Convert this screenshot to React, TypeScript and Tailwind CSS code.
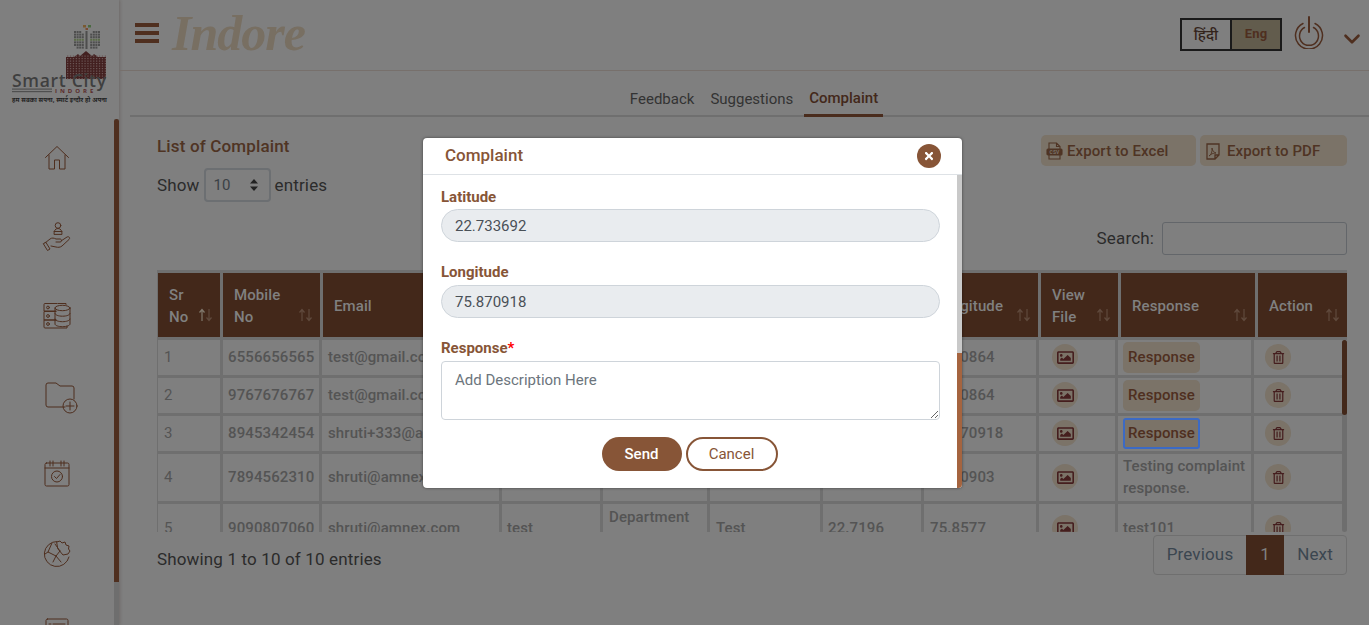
import { FaRegImage, FaRegTrashAlt, FaTimes } from 'react-icons/fa';
import { ChevronDown } from 'lucide-react';

const HEAD_COLS = [65, 100, 179, 101, 107, 113, 101, 117, 80, 137, 92];
const BODY_COLS = [65, 99, 180, 101, 107, 113, 101, 115, 79, 136, 91];

const HEADERS = [
  ['Sr', 'No'],
  ['Mobile', 'No'],
  ['Email'],
  ['Name'],
  ['Department'],
  ['Complaint'],
  ['Latitude'],
  ['Longitude'],
  ['View', 'File'],
  ['Response'],
  ['Action'],
];

type Row = {
  mobile: string;
  email: string;
  name: string;
  dept: string;
  text: string;
  lat: string;
  lng: string;
  response: string;
  focus?: boolean;
  h: string;
};

const ROWS: Row[] = [
  { mobile: '6556656565', email: 'test@gmail.com', name: 'test', dept: 'Water', text: 'Test', lat: '22.7196', lng: '75.80864', response: '', h: 'h-[36px]' },
  { mobile: '9767676767', email: 'test@gmail.com', name: 'test', dept: 'Water', text: 'Test', lat: '22.7196', lng: '75.80864', response: '', h: 'h-[38px]' },
  { mobile: '8945342454', email: 'shruti+333@amnex.com', name: 'shruti', dept: 'Roads', text: 'Test', lat: '22.733692', lng: '75.870918', response: '', focus: true, h: 'h-[38px]' },
  { mobile: '7894562310', email: 'shruti@amnex.com', name: 'shruti', dept: 'Roads', text: 'Test', lat: '22.7196', lng: '75.80903', response: 'Testing complaint response.', h: 'h-[50px]' },
  { mobile: '9090807060', email: 'shruti@amnex.com', name: 'test', dept: 'Department of Water', text: 'Test', lat: '22.7196', lng: '75.8577', response: 'test101', h: 'h-[52px]' },
];

function SortArrows({ active }: { active?: boolean }) {
  return (
    <svg width="15" height="14" viewBox="0 0 15 14" className="absolute right-[7px] bottom-[15px]" fill="none" strokeWidth="1.2">
      <path d="M4 13V2M1.500 4.500 4 1.500l2.500 3" stroke={active ? '#80786c' : '#604a3d'} />
      <path d="M11 1v11M8.500 9.500 11 12.500l2.500-3" stroke="#604a3d" />
    </svg>
  );
}

function Logo() {
  const wings: number[][] = [];
  for (let y = 0; y < 7; y++) {
    for (let x = 0; x < 4; x++) {
      if (!(y === 6 && x === 0) && !(y === 0 && x === 3)) wings.push([x, y]);
    }
  }
  const palace: number[][] = [];
  for (let y = 0; y < 10; y++) {
    for (let x = 0; x < 14; x++) {
      palace.push([x, y]);
    }
  }
  return (
    <svg width="118" height="118" viewBox="0 0 118 118" className="shrink-0">
      <rect x="83" y="25" width="3" height="2.500" fill="#7a5a30" />
      <rect x="88" y="25" width="3" height="2.500" fill="#4a6a40" />
      <rect x="85.500" y="28" width="2.500" height="2" fill="#7a4a30" />
      <rect x="85.500" y="31" width="2" height="18" fill="#4d4d4d" />
      {wings.map(([x, y]) => (
        <rect key={`l${x}-${y}`} x={74 + x * 2.6} y={31 + y * 2.6} width="2" height="2" fill={y === 3 ? '#5a6a48' : '#4e4e4e'} />
      ))}
      {wings.map(([x, y]) => (
        <rect key={`r${x}-${y}`} x={98 - x * 2.6} y={31 + y * 2.6} width="2" height="2" fill={y === 3 ? '#5a6a48' : '#4e4e4e'} />
      ))}
      <path d="M66 57h8l4-3 2 2 6-5 6 5 2-2 4 3h8v22H66z" fill="#432020" />
      {palace.map(([x, y]) => (
        <rect key={`p${x}-${y}`} x={67 + x * 2.9} y={55.5 + y * 2.5} width="1.300" height="1.200" fill="#6a5554" />
      ))}
      <text x="12" y="87" fontFamily="'Open Sans', sans-serif" fontSize="17.500" fontWeight="600" letterSpacing="0.700" fill="#3f3f3f">
        Smart City
      </text>
      <rect x="12" y="88.500" width="40" height="1.200" fill="#4f4f4f" />
      <rect x="12" y="91" width="40" height="1.200" fill="#4f4f4f" />
      <text x="55" y="93" fontFamily="'Open Sans', sans-serif" fontSize="6" letterSpacing="3" fontWeight="700" fill="#5a2a2a">
        INDORE
      </text>
      <text x="12" y="101.500" fontFamily="'Noto Sans', sans-serif" fontSize="7" fontWeight="700" textLength="95" lengthAdjust="spacingAndGlyphs" fill="#1e1e1e">
        हम सबका सपना, स्मार्ट इन्दौर हो अपना
      </text>
    </svg>
  );
}

const ICON = { fill: 'none', stroke: '#4f2f1f', strokeWidth: 1, strokeLinejoin: 'round', strokeLinecap: 'round' } as const;

function HomeIcon() {
  return (
    <svg width="26" height="26" viewBox="0 0 26 26" {...ICON}>
      <path d="M1.500 12.500 13 1.500l11.500 11M5 10v14h5.500v-9h5v9H21V10" />
    </svg>
  );
}
function HandIcon() {
  return (
    <svg width="30" height="30" viewBox="0 0 30 30" {...ICON}>
      <circle cx="16" cy="3.500" r="2.800" />
      <path d="M12 12c0-3 1-5.500 4-5.500s4 2.500 4 5.500zM12 9.500h8M3 21l5-4c2-1.500 4-1 6 0h4c2 0 2 3 0 3h-4M19 19l6-4c2-1 3.500 1 2 2.500L20 24c-2 1.500-4 1.500-6 1l-5-1M1.500 22l4 6.500 2.500-1.500-4-6.500z" />
    </svg>
  );
}
function ServerIcon() {
  return (
    <svg width="28" height="28" viewBox="0 0 28 28" {...ICON}>
      <path d="M14 1.500H2a1 1 0 0 0-1 1V9h12M13 9.500H1V18h12M13 18H1v7a1 1 0 0 0 1 1h22v-2M15 1.500h8v1" />
      <circle cx="5" cy="5.500" r="1.400" />
      <circle cx="5" cy="14" r="1.400" />
      <circle cx="5" cy="22" r="1.400" />
      <ellipse cx="19.500" cy="6" rx="7.500" ry="2.700" />
      <path d="M12 6v16c0 1.500 3.400 2.700 7.500 2.700S27 23.500 27 22V6M12 11.500c0 1.500 3.400 2.700 7.500 2.700s7.500-1.200 7.500-2.700M12 17c0 1.500 3.400 2.700 7.500 2.700S27 18.500 27 17" />
    </svg>
  );
}
function FolderIcon() {
  return (
    <svg width="34" height="32" viewBox="0 0 34 32" {...ICON}>
      <path d="M20 25H3a2 2 0 0 1-2-2V3a2 2 0 0 1 2-2h8l4 3h12a2 2 0 0 1 2 2v11" />
      <circle cx="25" cy="24" r="7" />
      <path d="M25 20v8M21 24h8" />
    </svg>
  );
}
function CalendarIcon() {
  return (
    <svg width="26" height="27" viewBox="0 0 26 27" {...ICON}>
      <rect x="1" y="3" width="24" height="23" rx="1.500" />
      <path d="M1 8h24M6 1v5M9 1v5M17 1v5M20 1v5" />
      <circle cx="13" cy="16.500" r="5.500" />
      <path d="m10.500 16.500 2 2 3.500-4" />
    </svg>
  );
}
function HandshakeIcon() {
  return (
    <svg width="28" height="28" viewBox="0 0 28 28" {...ICON}>
      <path d="M14 2.500A12.500 12.500 0 1 0 26 18" />
      <path d="M9 4 5 13l8 4 4-5M5 13l-3 2M13 17l-3 6M13 17l5 6M17 12l-5-7" />
      <path d="m14 3 3-1 2 2 3-1 1 3 3 1-.500 3 1.500 2-2 3-5 1-5-6z" />
    </svg>
  );
}
function CardIcon() {
  return (
    <svg width="24" height="28" viewBox="0 0 24 28" {...ICON}>
      <rect x="1" y="1" width="22" height="26" rx="1.500" />
      <path d="M4 6h2M8 6h12M4 10h2M8 10h12" />
    </svg>
  );
}

function PowerIcon() {
  return (
    <svg width="30" height="33" viewBox="0 0 30 33" fill="none" stroke="#4f2f1f" strokeLinecap="round">
      <path d="M9 7.500a13.500 13.500 0 1 0 12 0" strokeWidth="1.500" />
      <path d="M10.500 11.500a9.500 9.500 0 1 0 9 0" strokeWidth="1.500" />
      <path d="M15 1v15" strokeWidth="2" />
    </svg>
  );
}

function CsvIcon() {
  return (
    <svg width="17" height="18" viewBox="0 0 17 18" fill="none" stroke="#4f3424" strokeWidth="1.100">
      <path d="M3 7V1h7.500L14 4.500V7M3 13v4h11v-4M10.500 1v3.500H14" />
      <rect x="1" y="7" width="15" height="6" rx="1" fill="#4f3424" />
      <text x="8.500" y="11.800" textAnchor="middle" fontSize="5" fontWeight="700" fill="#7b7368" stroke="none">CSV</text>
    </svg>
  );
}

function PdfIcon() {
  return (
    <svg width="14" height="17" viewBox="0 0 14 17" fill="none" stroke="#4f3424" strokeWidth="1.300">
      <path d="M1 1h12v11l-4 4H1zM9 16v-4h4" />
      <path d="M3 13c2-1 3.500-4 3-8 .500 3 1.500 4 4 5-3 0-5 1-7 3z" strokeWidth="0.900" />
    </svg>
  );
}

function CircleBtn({ trash }: { trash?: boolean }) {
  return (
    <span className="inline-flex h-[26px] w-[26px] items-center justify-center rounded-full bg-[#7b7368] text-[#451e1e]">
      {trash ? <FaRegTrashAlt size={13} /> : <FaRegImage size={17} />}
    </span>
  );
}

function Complaint() {
  return (
    <div className="absolute left-[423px] top-[138px] flex h-[350px] w-[539px] flex-col overflow-hidden rounded-[4px] bg-white tracking-normal shadow-[0_0_3px_rgba(0,0,0,0.5)]">
      <div className="flex h-[37px] shrink-0 items-center justify-between border-b border-[#dee2e6] pl-[22px] pr-[21px]">
        <span className="text-[17px] font-medium text-[#875537]">Complaint</span>
        <span className="flex h-[24px] w-[24px] items-center justify-center rounded-full bg-[#875537] text-white">
          <FaTimes size={12} />
        </span>
      </div>
      <div className="flex min-h-0 flex-1">
        <div className="flex-1 pl-[18px] pr-[17px] pt-[13px]">
          <label className="block text-[15px] font-bold leading-[18px] text-[#875537]">Latitude</label>
          <input readOnly value="22.733692" className="mt-[3px] block h-[33px] w-full rounded-full border border-[#ced4da] bg-[#e9ecef] px-[13px] text-[15px] text-[#495057] outline-none" />
          <label className="mt-[21px] block text-[15px] font-bold leading-[18px] text-[#875537]">Longitude</label>
          <input readOnly value="75.870918" className="mt-[4px] block h-[33px] w-full rounded-full border border-[#ced4da] bg-[#e9ecef] px-[13px] text-[15px] text-[#495057] outline-none" />
          <label className="mt-[21px] block text-[15px] font-bold leading-[18px] text-[#875537]">
            Response<span className="text-[#ff0000]">*</span>
          </label>
          <textarea placeholder="Add Description Here" className="mt-[4px] block h-[59px] w-full rounded-[4px] border border-[#ced4da] px-[13px] py-[6px] text-[15px] leading-[24px] text-[#495057] outline-none placeholder:text-[#6c757d]" />
          <div className="mt-[17px] flex justify-center gap-[4px] pr-[2px]">
            <button className="h-[34px] w-[80px] rounded-full bg-[#875537] text-[15px] font-medium text-white">Send</button>
            <button className="h-[34px] w-[92px] rounded-full border-2 border-[#875537] bg-white text-[15px] text-[#875537]">Cancel</button>
          </div>
        </div>
        <div className="flex w-[5px] shrink-0 flex-col bg-[#c9c9c9]">
          <div className="mt-auto h-[135px] bg-[#a5643f]" />
        </div>
      </div>
    </div>
  );
}

export default function App() {
  return (
    <div className="relative flex h-[625px] w-[1369px] overflow-hidden bg-[#7f7f7f] font-['Roboto','Noto_Sans',sans-serif] text-[17px] tracking-[0.15px] text-[#2b2b2b]">
      <aside className="flex h-full w-[119px] shrink-0 shadow-[1px_0_3px_rgba(60,40,30,0.25)]">
        <div className="flex w-[114px] min-w-0 flex-col">
          <Logo />
          <nav className="flex flex-col items-center">
            <div className="flex h-[79px] shrink-0 items-center"><HomeIcon /></div>
            <div className="flex h-[79px] shrink-0 items-center"><HandIcon /></div>
            <div className="flex h-[79px] shrink-0 items-center"><ServerIcon /></div>
            <div className="flex h-[79px] shrink-0 items-center pl-[10px] pt-[7px]"><FolderIcon /></div>
            <div className="flex h-[79px] shrink-0 items-center"><CalendarIcon /></div>
            <div className="flex h-[79px] shrink-0 items-center"><HandshakeIcon /></div>
            <div className="flex h-[79px] shrink-0 items-center"><CardIcon /></div>
          </nav>
        </div>
        <div className="mt-[119px] flex h-[506px] w-[5px] flex-col bg-[#6e6e6e]">
          <div className="h-[463px] rounded-t-[3px] bg-[#4f2f1f]" />
        </div>
      </aside>

      <main className="flex min-w-0 flex-1 flex-col">
        <header className="flex h-[71px] shrink-0 items-center border-b border-[#77706c] pl-[16px]">
          <div className="mb-[5px] flex h-[20px] w-[24px] flex-col justify-between">
            <span className="h-[4px] bg-[#4f2f1f]" />
            <span className="h-[4px] bg-[#4f2f1f]" />
            <span className="h-[4px] bg-[#4f2f1f]" />
          </div>
          <span className="mb-[4px] ml-[13px] font-['Liberation_Serif',serif] text-[50px] font-bold italic leading-none tracking-[-1px] text-[#786f62]">Indore</span>
          <div className="ml-auto flex items-center">
            <div className="mb-[2px] flex h-[33px]">
              <span className="flex w-[52px] items-center justify-center border-2 border-[#1a1a1a] font-['Noto_Sans',sans-serif] text-[15px] font-medium text-[#33231a]">हिंदी</span>
              <span className="flex w-[50px] items-center justify-center border-2 border-l-0 border-[#1a1a1a] bg-[#625c4d] text-[13px] font-bold text-[#4f2f1f]">Eng</span>
            </div>
            <div className="mb-[6px] ml-[12px]"><PowerIcon /></div>
            <ChevronDown size={26} strokeWidth={2.4} className="ml-[15px] mr-[4px] mt-[8px] text-[#4f2f1f]" />
          </div>
        </header>

        <div className="ml-[11px] flex h-[46px] shrink-0 items-end justify-center gap-[6px] border-b-2 border-[#6f6f6f] pl-[9px] text-[15px] tracking-normal">
          <span className="px-[5px] pb-[5px] text-[#333]">Feedback</span>
          <span className="px-[5px] pb-[5px] text-[#333]">Suggestions</span>
          <span className="-mb-[2px] border-b-[3px] border-[#4a2c1d] px-[5px] pb-[5px] font-medium text-[#43281a]">Complaint</span>
        </div>

        <section className="pl-[38px] pr-[22px] pt-[18px]">
          <div className="flex items-start justify-between">
            <h2 className="text-[17px] font-medium leading-[22px] text-[#4f3424]">List of Complaint</h2>
            <div className="flex gap-[4px] text-[15px] tracking-[0.1px]">
              <button className="flex h-[31px] w-[155px] items-center gap-[4px] rounded-[5px] bg-[#7b7368] pl-[5px] pt-[1px] font-medium text-[#4f3424]">
                <CsvIcon />Export to Excel
              </button>
              <button className="flex h-[31px] w-[147px] items-center gap-[7px] rounded-[5px] bg-[#7b7368] pl-[6px] pt-[1px] font-medium text-[#4f3424]">
                <PdfIcon />Export to PDF
              </button>
            </div>
          </div>

          <div className="mt-[2px] flex items-center gap-[4px] leading-[34px]">
            <span>Show</span>
            <span className="flex h-[34px] w-[67px] items-center justify-between rounded-[4px] border-2 border-[#6c6f72] pl-[8px] pr-[11px] text-[15px] text-[#3b4146]">
              10
              <svg width="8" height="12" viewBox="0 0 8 12" fill="#222">
                <path d="M4 0 8 4.500H0zM4 12 0 7.500h8z" />
              </svg>
            </span>
            <span>entries</span>
          </div>

          <div className="mt-[20px] flex items-center justify-end gap-[8px]">
            <span>Search:</span>
            <span className="h-[33px] w-[185px] rounded-[3px] border border-[#63666a]" />
          </div>

          <div className="mt-[15px] w-[1190px] overflow-hidden">
            <table className="-ml-[2px] w-[1192px] table-fixed border-collapse text-[15px] tracking-[0.1px]">
              <colgroup>
                {HEAD_COLS.map((w, i) => (
                  <col key={i} style={{ width: w }} />
                ))}
              </colgroup>
              <thead>
                <tr className="h-[67px]">
                  {HEADERS.map((lines, i) => (
                    <th key={i} className="relative border-[3px] border-[#6f6f6f] bg-[#43281a] px-[11px] pt-[1px] text-left font-medium leading-[22px] text-[#808080]">
                      {lines.map((l) => (
                        <div key={l}>{l}</div>
                      ))}
                      <SortArrows active={i === 0} />
                    </th>
                  ))}
                </tr>
              </thead>
            </table>
          </div>

          <div className="flex h-[192px] w-[1190px]">
            <div className="min-w-0 flex-1 overflow-hidden">
              <table className="-ml-[2px] w-[1187px] table-fixed border-collapse text-[15px] tracking-[0.1px] text-[#545454]">
                <colgroup>
                  {BODY_COLS.map((w, i) => (
                    <col key={i} style={{ width: w }} />
                  ))}
                </colgroup>
                <tbody className="font-medium">
                  {ROWS.map((r, i) => (
                    <tr key={r.mobile} className={r.h}>
                      <td className="border-[3px] border-t-0 border-[#6f6f6f] px-[6px] font-normal">{i + 1}</td>
                      <td className="border-[3px] border-t-0 border-[#6f6f6f] px-[5px]">{r.mobile}</td>
                      <td className="overflow-hidden whitespace-nowrap border-[3px] border-t-0 border-[#6f6f6f] px-[6px]">{r.email}</td>
                      <td className="border-[3px] border-t-0 border-[#6f6f6f] px-[5px]">{r.name}</td>
                      <td className="border-[3px] border-t-0 border-[#6f6f6f] px-[6px] leading-[22px]">{r.dept}</td>
                      <td className="border-[3px] border-t-0 border-[#6f6f6f] px-[6px]">{r.text}</td>
                      <td className="border-[3px] border-t-0 border-[#6f6f6f] px-[5px]">{r.lat}</td>
                      <td className="border-[3px] border-t-0 border-[#6f6f6f] px-[6px]">{r.lng}</td>
                      <td className="border-[3px] border-t-0 border-[#6f6f6f] pl-[13px]"><div className="flex"><CircleBtn /></div></td>
                      <td className="border-[3px] border-t-0 border-[#6f6f6f] pl-[5px] leading-[22px]">
                        {r.response || (
                          <button className={`flex h-[31px] w-[77px] items-center justify-center rounded-[3px] bg-[#7b7368] text-[15px] font-medium text-[#4f2f1f] ${r.focus ? 'border-2 border-[#3c6ac4]' : 'rounded-[5px]'}`}>
                            Response
                          </button>
                        )}
                      </td>
                      <td className="border-[3px] border-t-0 border-[#6f6f6f] pl-[11px]"><div className="flex"><CircleBtn trash /></div></td>
                    </tr>
                  ))}
                </tbody>
              </table>
            </div>
            <div className="w-[5px] shrink-0 rounded-[3px] bg-[#6e6e6e]">
              <div className="h-[75px] rounded-[3px] bg-[#43281a]" />
            </div>
          </div>

          <div className="mt-[3px] flex items-start justify-between">
            <span className="mt-[12px] leading-[24px]">Showing 1 to 10 of 10 entries</span>
            <div className="flex h-[40px] rounded-[4px] border border-[#6f6f6f] text-[#3b4650]">
              <span className="flex w-[92px] items-center justify-center">Previous</span>
              <span className="-my-px flex h-[40px] w-[38px] items-center justify-center bg-[#43281a] text-[#808080]">1</span>
              <span className="flex w-[62px] items-center justify-center">Next</span>
            </div>
          </div>
        </section>
      </main>

      <Complaint />
    </div>
  );
}
